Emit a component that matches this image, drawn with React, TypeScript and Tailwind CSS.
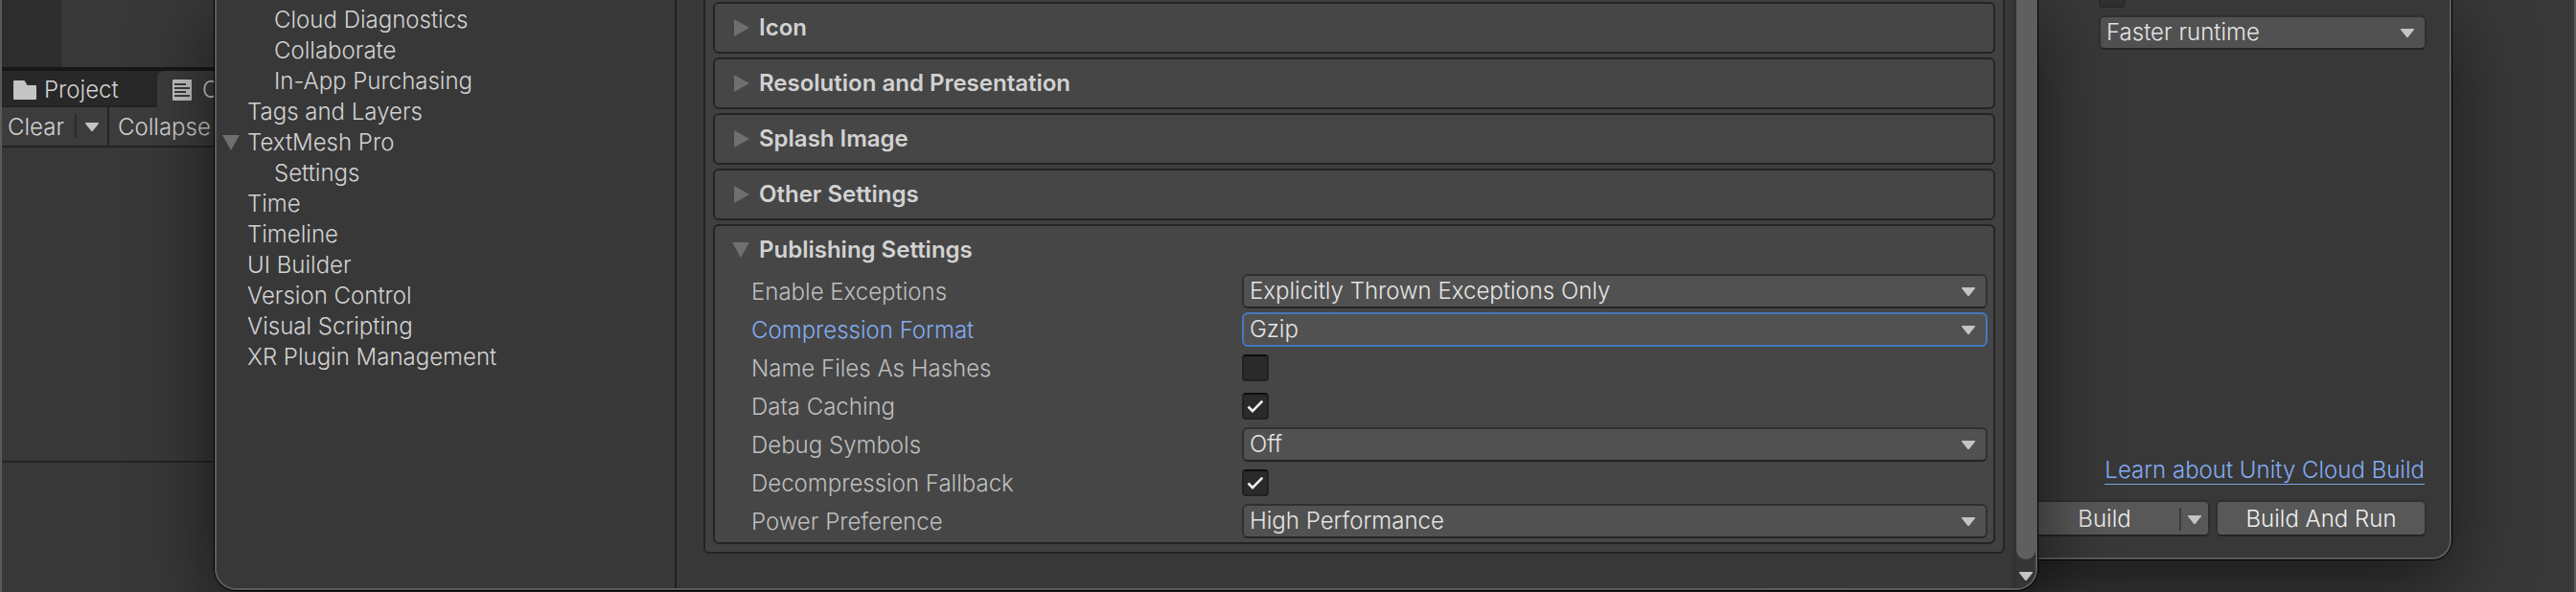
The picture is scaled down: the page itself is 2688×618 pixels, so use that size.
import { useState } from "react";

type NavItem = { label: string; child?: boolean; open?: boolean };

const navItems: NavItem[] = [
  { label: "Cloud Diagnostics", child: true },
  { label: "Collaborate", child: true },
  { label: "In-App Purchasing", child: true },
  { label: "Tags and Layers" },
  { label: "TextMesh Pro", open: true },
  { label: "Settings", child: true },
  { label: "Time" },
  { label: "Timeline" },
  { label: "UI Builder" },
  { label: "Version Control" },
  { label: "Visual Scripting" },
  { label: "XR Plugin Management" },
];

const sections = ["Icon", "Resolution and Presentation", "Splash Image", "Other Settings"];

type Setting =
  | { id: string; label: string; kind: "select"; value: string; options: string[]; active?: boolean }
  | { id: string; label: string; kind: "check"; checked: boolean };

const settings: Setting[] = [
  {
    id: "exceptions",
    label: "Enable Exceptions",
    kind: "select",
    value: "Explicitly Thrown Exceptions Only",
    options: ["None", "Explicitly Thrown Exceptions Only", "Full Without Stacktrace"],
  },
  {
    id: "compression",
    label: "Compression Format",
    kind: "select",
    value: "Gzip",
    options: ["Brotli", "Gzip", "Disabled"],
    active: true,
  },
  { id: "hashes", label: "Name Files As Hashes", kind: "check", checked: false },
  { id: "caching", label: "Data Caching", kind: "check", checked: true },
  { id: "symbols", label: "Debug Symbols", kind: "select", value: "Off", options: ["Off", "External", "Embedded"] },
  { id: "fallback", label: "Decompression Fallback", kind: "check", checked: true },
  {
    id: "power",
    label: "Power Preference",
    kind: "select",
    value: "High Performance",
    options: ["Default", "Low Power", "High Performance"],
  },
];

function Caret({ className = "" }: { className?: string }) {
  return (
    <svg className={`h-[9px] w-[14px] shrink-0 fill-[#c4c4c4] ${className}`} viewBox="0 0 14 9" aria-hidden="true">
      <path d="M0 0h14v1L7.6 9H6.4L0 1z" />
    </svg>
  );
}

function Foldout({ open }: { open?: boolean }) {
  return (
    <svg className="size-[18px] shrink-0 fill-[#6f6f6f]" viewBox="0 0 18 18" aria-hidden="true">
      <path d={open ? "M0 1h18L9 17z" : "M0 0v18l16-9z"} />
    </svg>
  );
}

function Dropdown({
  id,
  value,
  options,
  active,
  label,
}: {
  id: string;
  value: string;
  options: string[];
  active?: boolean;
  label?: string;
}) {
  const edge = active ? "border-[#4678bc]" : "border-[#303030] border-b-[#242424]";
  return (
    <div className="relative flex min-w-0 flex-1">
      <select
        id={id}
        aria-label={label}
        defaultValue={value}
        className={`h-9 w-full appearance-none rounded-md border-2 bg-[#515151] pr-10 pb-px pl-[6px] text-[#e4e4e4] outline-none ${edge}`}
      >
        {options.map((o) => (
          <option key={o}>{o}</option>
        ))}
      </select>
      <Caret className="pointer-events-none absolute top-[14px] right-[13px]" />
    </div>
  );
}

function Checkbox({ id, checked, label }: { id: string; checked: boolean; label?: string }) {
  const [on, setOn] = useState(checked);
  return (
    <span className="relative flex size-7">
      <input
        id={id}
        aria-label={label}
        type="checkbox"
        checked={on}
        onChange={() => setOn(!on)}
        className="size-7 appearance-none rounded border-2 border-[#212121] border-t-[#0d0d0d] bg-[#2a2a2a]"
      />
      {on && (
        <svg
          className="pointer-events-none absolute inset-0 fill-none stroke-[#eeeeee] stroke-[2.6]"
          viewBox="0 0 28 28"
          aria-hidden="true"
        >
          <path d="M6.5 14.5l4.5 4.7L21.3 8.6" />
        </svg>
      )}
    </span>
  );
}

function EditorBackdrop() {
  return (
    <div className="flex w-1/2 flex-col">
      <div className="h-[70px] w-[62px] bg-[#2d2d2d]" />
      <div className="h-1 bg-[#171717]" />
      <div className="flex h-[38px] bg-[#282828]">
        <button className="flex w-[162px] items-center gap-2 rounded-tl-lg border-b-2 border-[#222222] pt-1 pl-3 text-[#d2d2d2]">
          <svg className="h-5 w-6 fill-[#c4c4c4]" viewBox="0 0 24 20" aria-hidden="true">
            <path d="M1 0h10.5l3 5H23a1 1 0 0 1 1 1v13a1 1 0 0 1-1 1H1a1 1 0 0 1-1-1V1a1 1 0 0 1 1-1z" />
          </svg>
          Project
        </button>
        <button className="flex w-[162px] items-center gap-[11px] rounded-tl-lg bg-[#3c3c3c] pt-0.5 pl-4 text-[#d2d2d2]">
          <svg className="h-[22px] w-5" viewBox="0 0 20 22" aria-hidden="true">
            <rect width="20" height="22" rx="1" fill="#c4c4c4" />
            <path d="M2 5h12M2 9h16M2 13h12M2 17h16" stroke="#3c3c3c" strokeWidth="2" />
          </svg>
          Console
        </button>
      </div>
      <div className="flex h-[42px] items-center border-b-2 border-[#232323] bg-[#3c3c3c] text-[#d2d2d2]">
        <button className="w-[76px] pt-0.5 pl-[6px] text-left">Clear</button>
        <div className="h-6 w-0.5 bg-[#2a2a2a]" />
        <button className="flex h-10 w-8 items-center justify-center" aria-label="Clear options">
          <Caret />
        </button>
        <div className="h-10 w-0.5 bg-[#232323]" />
        <button className="pt-0.5 pl-[9px]">Collapse</button>
      </div>
      <div className="h-[327px]" />
      <div className="h-0.5 bg-[#242424]" />
    </div>
  );
}

function BuildWindow() {
  return (
    <section className="absolute top-0 right-32 flex w-[700px] flex-col items-end rounded-b-[20px] border-2 border-t-0 border-[#5c5c5c] bg-[#383838] pr-6 pb-[22px] shadow-[0_0_0_1px_#000,0_24px_80px_rgba(0,0,0,0.55)]">
      <div className="flex h-2 w-[342px] items-end">
        <div className="h-2 w-7 rounded-b border-2 border-t-0 border-[#2a2a2a] bg-[#303030]" />
      </div>
      <div className="mt-2 flex w-[342px]">
        <Dropdown
          id="optimization"
          label="Code Optimization"
          value="Faster runtime"
          options={["Shorter build time", "Faster runtime"]}
        />
      </div>
      <a href="#cloud-build" className="mt-[423px] mr-0.5 border-b border-[#7ba3e8] text-[#84abf2]">
        <span className="block h-[30px] leading-8">Learn about Unity Cloud Build</span>
      </a>
      <div className="mt-4 flex gap-[6px] text-[#eeeeee]">
        <div className="relative flex">
          <button className="h-[38px] w-[220px] rounded-md border-2 border-[#303030] border-b-[#242424] bg-[#585858] pt-0.5">
            Build
          </button>
          <button
            aria-label="Build options"
            className="absolute top-2 right-0.5 flex h-6 w-[30px] items-center justify-center border-l-2 border-[#3a3a3a]"
          >
            <Caret className="w-3" />
          </button>
        </div>
        <button className="h-[38px] w-[220px] rounded-md border-2 border-[#303030] border-b-[#242424] bg-[#585858] pt-0.5">
          Build And Run
        </button>
      </div>
    </section>
  );
}

function SettingsWindow() {
  return (
    <section className="absolute top-0 right-[560px] left-[222px] flex overflow-hidden rounded-b-[22px] border-2 border-t-0 border-[#5c5c5c] bg-[#383838]">
      <nav className="w-[480px] shrink-0 border-r-2 border-[#212121] pt-[5px] pl-[6px] text-[#d2d2d2]">
        <ul>
          {navItems.map((item) => (
            <li key={item.label} className={`flex h-8 items-center gap-2 ${item.child ? "pl-[54px]" : item.open ? "" : "pl-[26px]"}`}>
              {item.open && <Foldout open />}
              <a href="#settings">{item.label}</a>
            </li>
          ))}
        </ul>
      </nav>
      <div className="min-w-0 flex-1 pr-2 pb-9 pl-7">
        <div className="flex flex-col gap-1 rounded-b-md border-2 border-t-0 border-[#242424] bg-[#404040] px-2 pt-0.5 pb-2">
          {sections.map((title) => (
            <button
              key={title}
              className="flex h-[54px] items-center gap-2 rounded-md border-2 border-[#242424] bg-[#464646] pl-5 font-semibold text-[#d2d2d2]"
            >
              <Foldout />
              {title}
            </button>
          ))}
          <div className="rounded-md border-2 border-[#242424] bg-[#464646] pr-[6px] pb-0.5 text-[#bebebe]">
            <button className="flex h-12 items-center gap-[10px] pt-0.5 pl-[18px] font-semibold text-[#d2d2d2]">
              <Foldout open />
              Publishing Settings
            </button>
            {settings.map((s) => (
              <div key={s.id} className="flex h-10 items-center pl-[38px]">
                <label
                  htmlFor={s.id}
                  className={`w-[512px] shrink-0 pt-0.5 ${s.kind === "select" && s.active ? "text-[#84abf2]" : ""}`}
                >
                  {s.label}
                </label>
                {s.kind === "select" ? (
                  <Dropdown id={s.id} value={s.value} options={s.options} active={s.active} />
                ) : (
                  <Checkbox id={s.id} checked={s.checked} />
                )}
              </div>
            ))}
          </div>
        </div>
      </div>
      <div className="flex w-6 shrink-0 flex-col border-l-4 border-[#323232] bg-[#353535]">
        <div className="flex-1 rounded-b-[10px] bg-[#5f5f5f]" />
        <button className="flex h-[30px] items-center justify-center pt-1" aria-label="Scroll down">
          <Caret />
        </button>
      </div>
    </section>
  );
}

export default function App() {
  return (
    <main className="relative min-h-screen overflow-hidden border-x-2 border-[#5a5a5a] bg-[#383838] font-['Inter',sans-serif] text-2xl leading-8 font-[350]">
      <EditorBackdrop />
      <BuildWindow />
      <div className="pointer-events-none absolute top-0 right-[560px] bottom-0.5 left-[222px] rounded-b-[22px] shadow-[0_0_0_1px_#000,0_24px_80px_rgba(0,0,0,0.6)]" />
      <SettingsWindow />
    </main>
  );
}
